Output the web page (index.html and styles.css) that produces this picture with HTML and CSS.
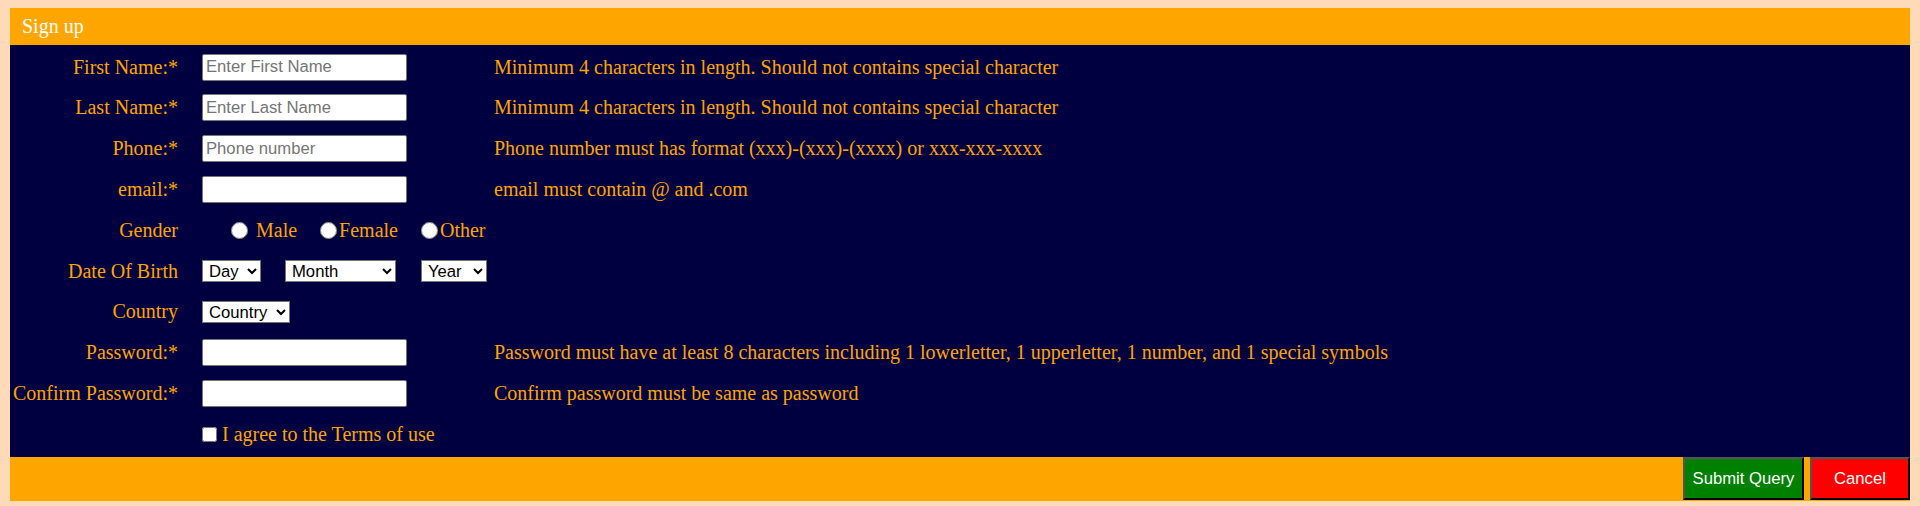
FILE: index.html
```html
<!DOCTYPE html>
<html>
<head>
  <title>Sign up</title>
  <link rel="stylesheet" href="styles.css">
</head>
<body>
  <div class="signup">
    <div class="signup-head">Sign up</div>
    <form class="signup-body" id="signupForm">
      <div class="row">
        <label for="firstName">First Name:<span class="req">*</span></label>
        <div class="field"><input type="text" id="firstName" class="text-input" placeholder="Enter First Name"></div>
        <div class="hint">Minimum 4 characters in length. Should not contains special character</div>
      </div>
      <div class="row">
        <label for="lastName">Last Name:<span class="req">*</span></label>
        <div class="field"><input type="text" id="lastName" class="text-input" placeholder="Enter Last Name"></div>
        <div class="hint">Minimum 4 characters in length. Should not contains special character</div>
      </div>
      <div class="row">
        <label for="phone">Phone:<span class="req">*</span></label>
        <div class="field"><input type="text" id="phone" class="text-input" placeholder="Phone number"></div>
        <div class="hint">Phone number must has format (xxx)-(xxx)-(xxxx) or xxx-xxx-xxxx</div>
      </div>
      <div class="row">
        <label for="email">email:<span class="req">*</span></label>
        <div class="field"><input type="text" id="email" class="text-input"></div>
        <div class="hint">email must contain @ and .com</div>
      </div>
      <div class="row">
        <label>Gender</label>
        <div class="field gender">
          <input type="radio" name="gender" id="male" class="radio-male">
          <label for="male" class="opt-male">Male</label>
          <input type="radio" name="gender" id="female" class="radio-next">
          <label for="female" class="opt">Female</label>
          <input type="radio" name="gender" id="other" class="radio-next">
          <label for="other" class="opt">Other</label>
        </div>
        <div class="hint"></div>
      </div>
      <div class="row">
        <label>Date Of Birth</label>
        <div class="field dob">
          <select class="sel sel-day"><option>Day</option></select>
          <select class="sel sel-month"><option>Month</option></select>
          <select class="sel sel-year"><option>Year</option></select>
        </div>
        <div class="hint"></div>
      </div>
      <div class="row">
        <label for="country">Country</label>
        <div class="field"><select id="country" class="sel sel-country"><option>Country</option></select></div>
        <div class="hint"></div>
      </div>
      <div class="row">
        <label for="password">Password:<span class="req">*</span></label>
        <div class="field"><input type="password" id="password" class="text-input"></div>
        <div class="hint">Password must have at least 8 characters including 1 lowerletter, 1 upperletter, 1 number, and 1 special symbols</div>
      </div>
      <div class="row">
        <label for="confirm">Confirm Password:<span class="req">*</span></label>
        <div class="field"><input type="password" id="confirm" class="text-input"></div>
        <div class="hint">Confirm password must be same as password</div>
      </div>
      <div class="row">
        <span></span>
        <div class="field terms">
          <input type="checkbox" id="terms">
          <label for="terms">I agree to the Terms of use</label>
        </div>
        <div class="hint"></div>
      </div>
    </form>
    <div class="signup-foot">
      <button type="submit" form="signupForm" id="submit-button">Submit Query</button>
      <button type="button" id="cancel-button">Cancel</button>
    </div>
  </div>
</body>
</html>
```

FILE: styles.css
```css
/* Sign up page */
body {
  margin: 8px 10px;
  background-color: #ffdab9;
  font-family: "Liberation Serif", "Times New Roman", serif;
  font-size: 20px;
}

.signup {
  display: flex;
  flex-direction: column;
}

.signup-head {
  background-color: #ffa500;
  color: white;
  height: 37px;
  box-sizing: border-box;
  padding: 7px 12px;
  line-height: 23px;
}

.signup-body {
  background-color: #000040;
  color: #ffa500;
  margin: 0;
  padding: 3px 0 3.5px;
  display: flex;
  flex-direction: column;
  gap: 2.5px;
}

.row {
  display: grid;
  grid-template-columns: 192px 292px 1fr;
  height: 38.3px;
  align-items: center;
}

.row > label {
  text-align: right;
  padding-right: 24px;
}

.field {
  display: flex;
  align-items: center;
}

.field > * {
  flex-shrink: 0;
}

.text-input {
  width: 205px;
  height: 27px;
  box-sizing: border-box;
  margin: 0;
  padding: 1px 3px;
  border: 1px solid #767676;
  border-radius: 2px;
  background-color: white;
  font-family: "Liberation Sans", Arial, sans-serif;
  font-size: 16.67px;
}

.text-input::placeholder {
  color: #757575;
}

/* gender radios */
.gender input[type="radio"] {
  width: 17px;
  height: 17px;
  margin: 0;
}

.gender input.radio-male {
  margin-left: 29px;
}

.opt-male {
  margin-left: 8px;
}

.gender input.radio-next {
  margin-left: 23px;
}

.opt {
  margin-left: 2px;
}

/* selects */
.sel {
  height: 22px;
  box-sizing: border-box;
  margin: 0;
  padding: 0 0 0 2px;
  border: 1px solid #767676;
  border-radius: 0;
  background-color: white;
  color: black;
  font-family: "Liberation Sans", Arial, sans-serif;
  font-size: 16.67px;
}

.sel-day {
  width: 59px;
}

.sel-month {
  width: 111px;
  margin-left: 24px;
}

.sel-year {
  width: 66px;
  margin-left: 25px;
}

.sel-country {
  width: 88px;
}

.terms input[type="checkbox"] {
  width: 15px;
  height: 15px;
  margin: 0 5px 0 0;
}

.signup-foot {
  background-color: #ffa500;
  height: 44px;
  display: flex;
  justify-content: flex-end;
  align-items: flex-start;
  gap: 6px;
}

button {
  height: 43px;
  margin-top: 0.5px;
  color: white;
  font-family: "Liberation Sans", Arial, sans-serif;
  font-size: 16.67px;
  cursor: pointer;
}

#submit-button {
  width: 121px;
  background-color: green;
}

#cancel-button {
  width: 100px;
  background-color: red;
}
```
